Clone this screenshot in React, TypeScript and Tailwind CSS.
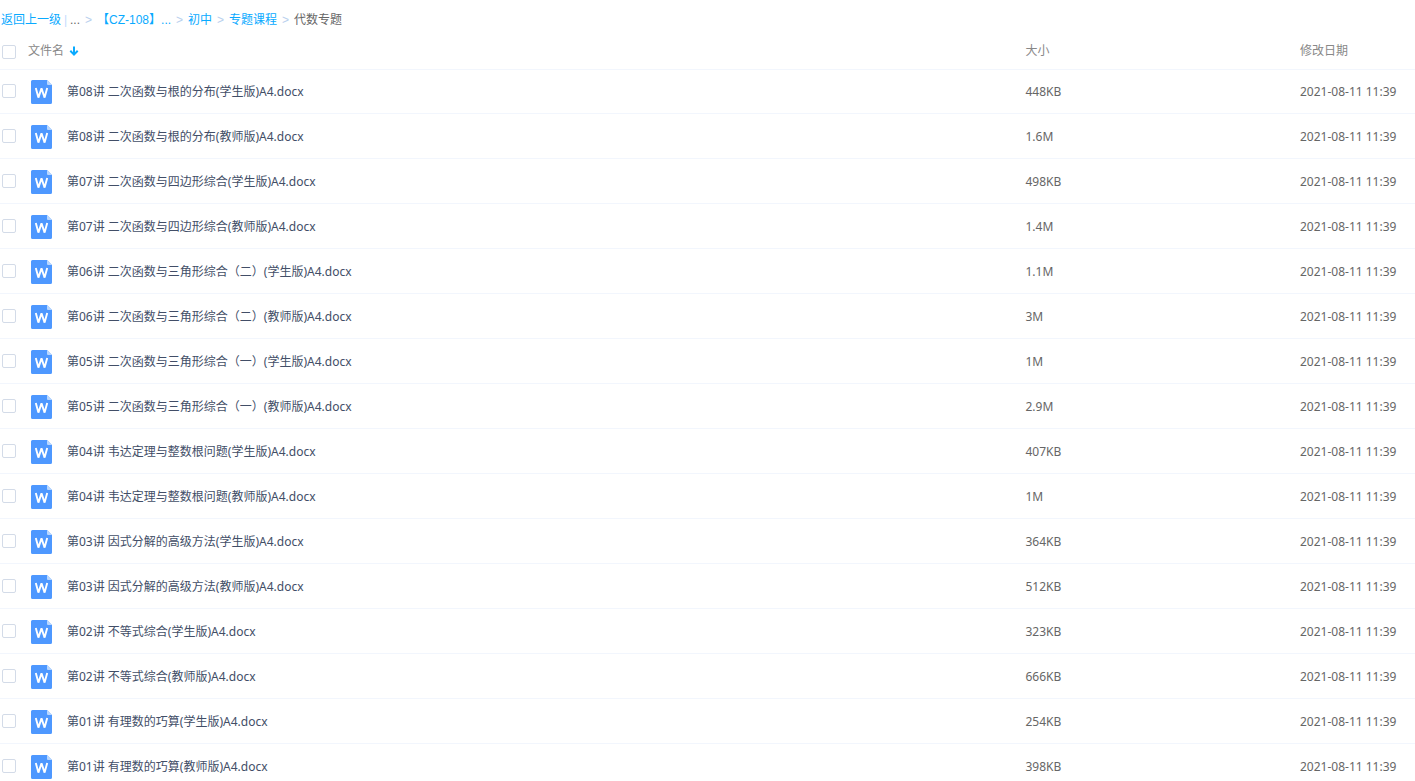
import { useState } from 'react';

type SortDir = 'asc' | 'desc';

interface FileRow {
  name: string;
  size: string;
  date: string;
}

const CRUMBS = ['【CZ-108】...', '初中', '专题课程'];

const FILES: FileRow[] = [
  { name: '第08讲 二次函数与根的分布(学生版)A4.docx', size: '448KB', date: '2021-08-11 11:39' },
  { name: '第08讲 二次函数与根的分布(教师版)A4.docx', size: '1.6M', date: '2021-08-11 11:39' },
  { name: '第07讲 二次函数与四边形综合(学生版)A4.docx', size: '498KB', date: '2021-08-11 11:39' },
  { name: '第07讲 二次函数与四边形综合(教师版)A4.docx', size: '1.4M', date: '2021-08-11 11:39' },
  { name: '第06讲 二次函数与三角形综合（二）(学生版)A4.docx', size: '1.1M', date: '2021-08-11 11:39' },
  { name: '第06讲 二次函数与三角形综合（二）(教师版)A4.docx', size: '3M', date: '2021-08-11 11:39' },
  { name: '第05讲 二次函数与三角形综合（一）(学生版)A4.docx', size: '1M', date: '2021-08-11 11:39' },
  { name: '第05讲 二次函数与三角形综合（一）(教师版)A4.docx', size: '2.9M', date: '2021-08-11 11:39' },
  { name: '第04讲 韦达定理与整数根问题(学生版)A4.docx', size: '407KB', date: '2021-08-11 11:39' },
  { name: '第04讲 韦达定理与整数根问题(教师版)A4.docx', size: '1M', date: '2021-08-11 11:39' },
  { name: '第03讲 因式分解的高级方法(学生版)A4.docx', size: '364KB', date: '2021-08-11 11:39' },
  { name: '第03讲 因式分解的高级方法(教师版)A4.docx', size: '512KB', date: '2021-08-11 11:39' },
  { name: '第02讲 不等式综合(学生版)A4.docx', size: '323KB', date: '2021-08-11 11:39' },
  { name: '第02讲 不等式综合(教师版)A4.docx', size: '666KB', date: '2021-08-11 11:39' },
  { name: '第01讲 有理数的巧算(学生版)A4.docx', size: '254KB', date: '2021-08-11 11:39' },
  { name: '第01讲 有理数的巧算(教师版)A4.docx', size: '398KB', date: '2021-08-11 11:39' },
];

function WordIcon() {
  return (
    <svg className="h-6 w-[21px] flex-shrink-0" viewBox="0 0 21 24" fill="none" aria-hidden="true">
      <path d="M1.5 0H16l5 5v17.5a1.5 1.5 0 0 1-1.5 1.5h-18A1.5 1.5 0 0 1 0 22.5v-21A1.5 1.5 0 0 1 1.5 0z" fill="#4e98ff" />
      <path d="M16 0l5 5h-4a1 1 0 0 1-1-1z" fill="#b8d7ff" />
      <path d="M4.8 8l2.6 9.6L10.5 8.4l3.1 9.2L16.2 8" stroke="#fff" strokeWidth="1.9" strokeLinejoin="bevel" />
    </svg>
  );
}

function Checkbox({ label, checked, onChange }: { label: string; checked: boolean; onChange: () => void }) {
  return (
    <input
      type="checkbox"
      aria-label={label}
      checked={checked}
      onChange={onChange}
      className="block h-3.5 w-3.5 appearance-none rounded-[2px] border border-[#d3dbe8] bg-white checked:border-[#09aaff] checked:bg-[#09aaff]"
    />
  );
}

function Separator() {
  return <span className="w-[17px] text-center text-[#b8cfee]">&gt;</span>;
}

export default function App() {
  const [selected, setSelected] = useState<string[]>([]);
  const [sortDir, setSortDir] = useState<SortDir>('desc');

  const rows = sortDir === 'desc' ? FILES : [...FILES].reverse();
  const allSelected = selected.length === FILES.length;

  const toggle = (name: string) =>
    setSelected((prev) => (prev.includes(name) ? prev.filter((n) => n !== name) : [...prev, name]));

  return (
    <div className="h-screen overflow-hidden bg-white font-['Noto_Sans','Noto_Sans_CJK_SC',sans-serif] text-xs text-[#424e67]">
      {/* Breadcrumb */}
      <nav className="flex h-10 items-center whitespace-nowrap pl-px font-['Liberation_Sans','Noto_Sans_CJK_SC',sans-serif] text-[#09aaff]">
        <a href="#up">返回上一级</a>
        <span className="w-[9px] text-center text-[#c4dbfe]">|</span>
        <span className="text-[#666]">...</span>
        {CRUMBS.map((crumb) => (
          <span key={crumb} className="flex">
            <Separator />
            <a href={`#${crumb}`}>{crumb}</a>
          </span>
        ))}
        <Separator />
        <span className="text-[#666]">代数专题</span>
      </nav>

      <table className="w-full table-fixed border-separate border-spacing-0 text-left">
        <colgroup>
          <col className="w-7" />
          <col />
          <col className="w-[19.4%]" />
          <col className="w-[115px]" />
        </colgroup>
        <thead className="text-[#888]">
          <tr className="h-[30px]">
            <th className="border-b border-[#f2f6fd] pb-1.5 pl-0.5">
              <Checkbox
                label="全选"
                checked={allSelected}
                onChange={() => setSelected(allSelected ? [] : FILES.map((f) => f.name))}
              />
            </th>
            <th className="border-b border-[#f2f6fd] pb-2 font-normal">
              <button
                className="flex items-center gap-1"
                onClick={() => setSortDir(sortDir === 'desc' ? 'asc' : 'desc')}
              >
                文件名
                <svg
                  className={`h-3 w-3 text-[#09aaff] ${sortDir === 'asc' ? 'rotate-180' : ''}`}
                  viewBox="0 0 12 12"
                  fill="none"
                  stroke="currentColor"
                  strokeWidth={2}
                >
                  <path d="M6 1.5v8M2.3 5.8L6 9.6l3.7-3.8" />
                </svg>
              </button>
            </th>
            <th className="border-b border-[#f2f6fd] pb-2 font-normal">大小</th>
            <th className="border-b border-[#f2f6fd] pb-2 font-normal">修改日期</th>
          </tr>
        </thead>
        <tbody>
          {rows.map(({ name, size, date }) => (
            <tr key={name} className="h-[45px] first:h-11 hover:bg-[#f4fbff]">
              <td className="border-b border-[#f2f6fd] pb-px pl-0.5">
                <Checkbox label={name} checked={selected.includes(name)} onChange={() => toggle(name)} />
              </td>
              <td className="border-b border-[#f2f6fd] pl-[3px] pt-px">
                <div className="flex items-center gap-[15px]">
                  <WordIcon />
                  <a href={`#${name}`} className="truncate hover:text-[#09aaff]">{name}</a>
                </div>
              </td>
              <td className="border-b border-[#f2f6fd] pt-px text-[#666]">{size}</td>
              <td className="whitespace-nowrap border-b border-[#f2f6fd] pt-px text-[#666]">{date}</td>
            </tr>
          ))}
        </tbody>
      </table>
    </div>
  );
}
